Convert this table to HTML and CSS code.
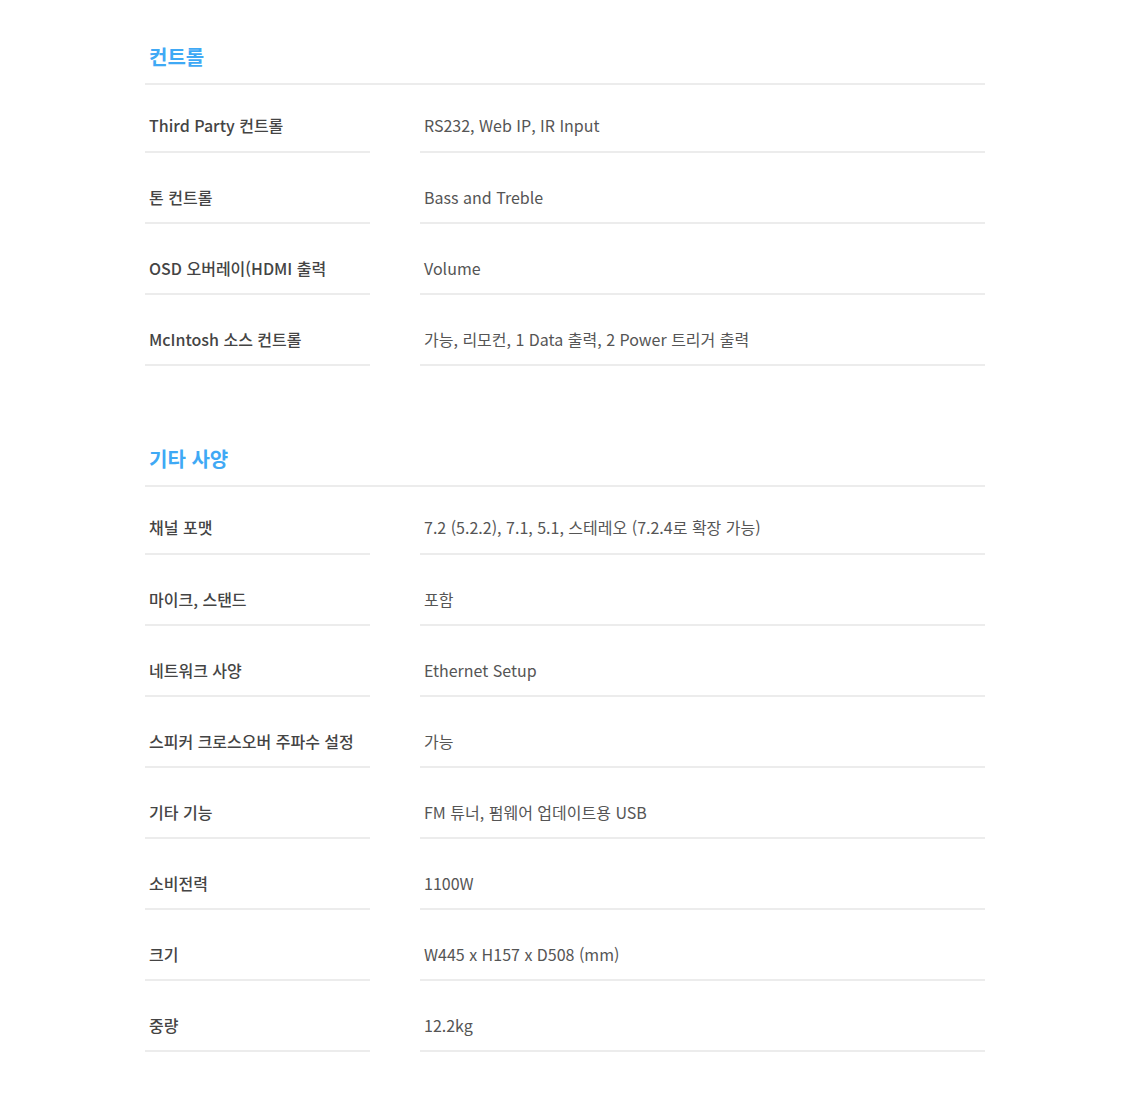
FILE: index.html
```html
<!DOCTYPE html>
<html lang="ko">

<head>
  <meta charset="UTF-8" />
  <title>사양</title>
  <link rel="stylesheet" href="styles.css">
</head>

<body>
  <div class="container">

    <div class="spec-section">
      <div class="spec-title">컨트롤</div>
      <div class="spec-row">
        <div class="spec-label">Third Party 컨트롤</div>
        <div class="spec-value">RS232, Web IP, IR Input</div>
      </div>
      <div class="spec-row">
        <div class="spec-label">톤 컨트롤</div>
        <div class="spec-value">Bass and Treble</div>
      </div>
      <div class="spec-row">
        <div class="spec-label">OSD 오버레이(HDMI 출력</div>
        <div class="spec-value">Volume</div>
      </div>
      <div class="spec-row">
        <div class="spec-label">McIntosh 소스 컨트롤</div>
        <div class="spec-value">가능, 리모컨, 1 Data 출력, 2 Power 트리거 출력</div>
      </div>
    </div>

    <div class="spec-section">
      <div class="spec-title">기타 사양</div>
      <div class="spec-row">
        <div class="spec-label">채널 포맷</div>
        <div class="spec-value">7.2 (5.2.2), 7.1, 5.1, 스테레오 (7.2.4로 확장 가능)</div>
      </div>
      <div class="spec-row">
        <div class="spec-label">마이크, 스탠드</div>
        <div class="spec-value">포함</div>
      </div>
      <div class="spec-row">
        <div class="spec-label">네트워크 사양</div>
        <div class="spec-value">Ethernet Setup</div>
      </div>
      <div class="spec-row">
        <div class="spec-label">스피커 크로스오버 주파수 설정</div>
        <div class="spec-value">가능</div>
      </div>
      <div class="spec-row">
        <div class="spec-label">기타 기능</div>
        <div class="spec-value">FM 튜너, 펌웨어 업데이트용 USB</div>
      </div>
      <div class="spec-row">
        <div class="spec-label">소비전력</div>
        <div class="spec-value">1100W</div>
      </div>
      <div class="spec-row">
        <div class="spec-label">크기</div>
        <div class="spec-value">W445 x H157 x D508 (mm)</div>
      </div>
      <div class="spec-row">
        <div class="spec-label">중량</div>
        <div class="spec-value">12.2kg</div>
      </div>
    </div>

  </div>
</body>

</html>
```

FILE: styles.css
```css
body {
  margin: 0;
  background-color: white;
  font-family: "Noto Sans CJK KR", "Noto Sans", sans-serif;
}

.container {
  width: 840px;
  margin: 0 auto;
  padding: 42px 0 40px;
}

.spec-section + .spec-section {
  margin-top: 78px;
}

.spec-title {
  color: #3fa9f5;
  font-size: 20px;
  font-weight: bold;
  line-height: 30px;
  padding: 0 4px 11px;
  border-bottom: 2px solid #ececec;
}

.spec-row {
  display: grid;
  grid-template-columns: 225px 1fr;
  gap: 50px;
}

.spec-label,
.spec-value {
  font-size: 16px;
  line-height: 24px;
  padding: 32px 4px 13px;
  border-bottom: 2px solid #ececec;
}

.spec-title + .spec-row .spec-label,
.spec-title + .spec-row .spec-value {
  padding-top: 28px;
  padding-bottom: 14px;
}

.spec-label {
  font-weight: 500;
  color: #444;
}

.spec-value {
  color: #555;
}
```
